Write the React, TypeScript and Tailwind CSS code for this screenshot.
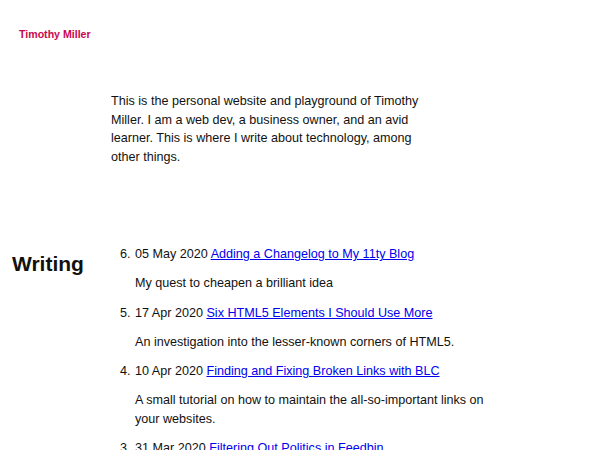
import React from "react";

const items = [
  { n: 6, date: "05 May 2020", title: "Adding a Changelog to My 11ty Blog", desc: "My quest to cheapen a brilliant idea" },
  { n: 5, date: "17 Apr 2020", title: "Six HTML5 Elements I Should Use More", desc: "An investigation into the lesser-known corners of HTML5." },
  { n: 4, date: "10 Apr 2020", title: "Finding and Fixing Broken Links with BLC", desc: "A small tutorial on how to maintain the all-so-important links on your websites." },
  { n: 3, date: "31 Mar 2020", title: "Filtering Out Politics in Feedbin", desc: "A look at keeping my feeds free of noise." },
];

export default function App() {
  return (
    <div className="min-h-[450px] bg-white text-[#111] font-['Liberation_Sans',Arial,sans-serif] text-[12.6px] leading-[18.6px]">
      <header className="pl-[19px] pt-[26px]">
        <div className="text-[10.6px] font-bold text-[#c8074e] leading-[16px]">Timothy Miller</div>
      </header>
      <section className="pl-[111px] pt-[50px]">
        <p className="w-[318px]">
          This is the personal website and playground of Timothy Miller. I am a web dev, a business owner, and an avid learner. This is where I write about technology, among other things.
        </p>
      </section>
      <section className="flex pt-[79px]">
        <h2 className="w-[111px] pl-[12px] pt-[6px] text-[21px] font-bold leading-[26px]">Writing</h2>
        <ol className="pl-[24px] w-[400px]">
          {items.map((it) => (
            <li key={it.n} className="relative mb-[10.8px]">
              <span className="absolute left-[-15px]">{it.n}.</span>
              <div>
                {it.date}{" "}
                <a href="#" className="text-[#0000ee] underline">{it.title}</a>
              </div>
              <p className="mt-[10.5px]">{it.desc}</p>
            </li>
          ))}
        </ol>
      </section>
    </div>
  );
}
